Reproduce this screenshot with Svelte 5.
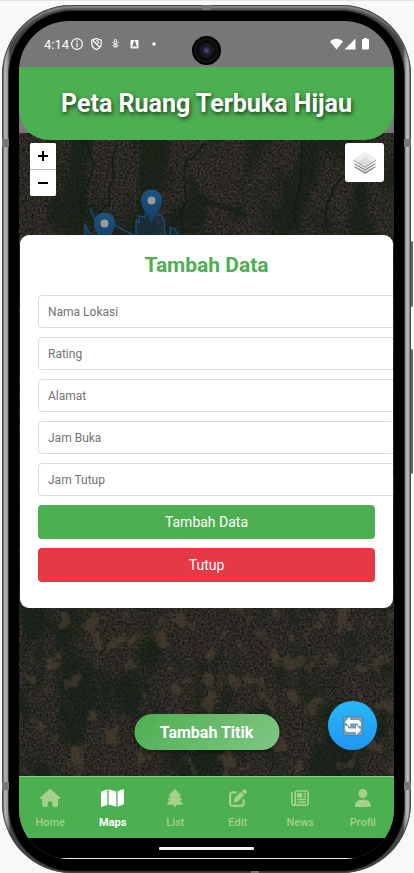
<script>
  let form = $state({ nama: '', rating: '', alamat: '', buka: '', tutup: '' });
  let open = $state(true);

  const fields = [
    { key: 'nama', label: 'Nama Lokasi' },
    { key: 'rating', label: 'Rating' },
    { key: 'alamat', label: 'Alamat' },
    { key: 'buka', label: 'Jam Buka' },
    { key: 'tutup', label: 'Jam Tutup' }
  ];

  const tabs = [
    { label: 'Home', box: '0 0 576 512', path: 'M575.8 255.5c0 18-15 32.1-32 32.1h-32l.7 160.2c0 2.7-.2 5.4-.5 8.1V472c0 22.1-17.9 40-40 40H392c-22.1 0-40-17.9-40-40V384c0-17.7-14.3-32-32-32H256c-17.7 0-32 14.3-32 32v88c0 22.1-17.9 40-40 40H104c-22.1 0-40-17.9-40-40V287.6H32c-18 0-32-14-32-32.1c0-9 3-17 10-24L266.4 8c7-7 15-8 22-8s15 2 21 7L564.8 231.5c8 7 12 15 11 24z' },
    { label: 'Maps', active: true, box: '0 30 576 452', path: 'M384 476.1L192 421.2V35.9L384 90.8V476.1zm32-1.2V88.4L543.1 37.5c15.8-6.3 32.9 5.3 32.9 22.3V394.6c0 9.8-6 18.6-15.1 22.3L416 474.8zM15.1 95.1L160 37.2V423.6L32.9 474.5C17.1 480.8 0 469.2 0 452.2V117.4c0-9.8 6-18.6 15.1-22.3z' },
    { label: 'List', box: '0 0 448 512', path: 'M210.6 5.9L62 169.4c-3.9 4.2-6 9.8-6 15.5C56 197.7 66.3 208 79.1 208H104L30.6 281.4c-4.2 4.2-6.6 10-6.6 16C24 309.9 34.1 320 46.6 320H80L5.4 409.5C1.9 413.7 0 419 0 424.5c0 13 10.5 23.5 23.5 23.5H192v32c0 17.7 14.3 32 32 32s32-14.3 32-32V448H424.5c13 0 23.5-10.5 23.5-23.5c0-5.5-1.9-10.8-5.4-15L368 320h33.4c12.5 0 22.6-10.1 22.6-22.6c0-6-2.4-11.8-6.6-16L344 208h24.9c12.7 0 23.1-10.3 23.1-23.1c0-5.7-2.1-11.3-6-15.5L237.4 5.9C234 2.1 229.1 0 224 0s-10 2.1-13.4 5.9z' },
    { label: 'Edit', box: '0 0 512 512', path: 'M471.6 21.7c-21.9-21.9-57.3-21.9-79.2 0L362.3 51.7l97.9 97.9 30.1-30.1c21.9-21.9 21.9-57.3 0-79.2L471.6 21.7zm-299.2 220c-6.1 6.1-10.8 13.6-13.5 21.9l-29.6 88.8c-2.9 8.6-.6 18.1 5.8 24.6s15.9 8.7 24.6 5.8l88.8-29.6c8.2-2.7 15.7-7.4 21.9-13.5L437.7 172.3 339.7 74.3 172.4 241.7zM96 64C43 64 0 107 0 160V416c0 53 43 96 96 96H352c53 0 96-43 96-96V320c0-17.7-14.3-32-32-32s-32 14.3-32 32v96c0 17.7-14.3 32-32 32H96c-17.7 0-32-14.3-32-32V160c0-17.7 14.3-32 32-32h96c17.7 0 32-14.3 32-32s-14.3-32-32-32H96z' },
    { label: 'News', box: '0 0 512 512', path: 'M168 80c-13.3 0-24 10.7-24 24V408c0 8.4-1.4 16.5-4.1 24H440c13.3 0 24-10.7 24-24V104c0-13.3-10.7-24-24-24H168zM72 480c-39.8 0-72-32.2-72-72V112C0 98.7 10.7 88 24 88s24 10.7 24 24V408c0 13.3 10.7 24 24 24s24-10.7 24-24V104c0-39.8 32.2-72 72-72H440c39.8 0 72 32.2 72 72V408c0 39.8-32.2 72-72 72H72zM176 136c0-13.3 10.7-24 24-24h96c13.3 0 24 10.7 24 24v80c0 13.3-10.7 24-24 24H200c-13.3 0-24-10.7-24-24V136zm200-24h32c13.3 0 24 10.7 24 24s-10.7 24-24 24H376c-13.3 0-24-10.7-24-24s10.7-24 24-24zm0 80h32c13.3 0 24 10.7 24 24s-10.7 24-24 24H376c-13.3 0-24-10.7-24-24s10.7-24 24-24zM200 272H408c13.3 0 24 10.7 24 24s-10.7 24-24 24H200c-13.3 0-24-10.7-24-24s10.7-24 24-24zm0 80H408c13.3 0 24 10.7 24 24s-10.7 24-24 24H200c-13.3 0-24-10.7-24-24s10.7-24 24-24z' },
    { label: 'Profil', box: '0 0 448 512', path: 'M224 256A128 128 0 1 0 224 0a128 128 0 1 0 0 256zm-45.7 48C79.8 304 0 383.8 0 482.3C0 498.7 13.3 512 29.7 512H418.3c16.4 0 29.7-13.3 29.7-29.7C448 383.8 368.2 304 269.7 304H178.3z' }
  ];

  const pins = [
    { x: 132, y: 57 },
    { x: 85, y: 80 }
  ];
</script>

<div class="page">
  <div class="phone">
    <i class="band top"></i><i class="band bottom"></i>
    <i class="band l1"></i><i class="band r1"></i>
    <i class="band l2"></i><i class="band r2"></i>
    <i class="key power"></i><i class="key volume"></i>
    <div class="bezel">
      <div class="screen">
        <div class="status">
          <span>4:14</span>
          <svg class="notes" width="120" height="14" viewBox="0 0 120 14" fill="none" stroke="#fff" stroke-width="1.2">
            <circle cx="7" cy="7" r="5.4" /><path d="M7 6v4M7 3.6v1.4" />
            <path d="M26.500 1.500l4.700 1.700v3.500c0 2.700-1.900 4.700-4.700 5.800-2.800-1.100-4.700-3.100-4.700-5.800V3.200zM23 3.500l7 7M26 3.500c3 0 3 3 1 4" />
            <g stroke-width="1"><circle cx="45.500" cy="3.800" r="1.300" /><path d="M42.500 5.500q3 2.400 6 0M43 8.500a2.700 2.700 0 0 0 5 0q-2.500-2.500-5 0zM44.500 9h2" /></g>
            <rect x="60.500" y="3" width="8" height="8.500" rx="1" fill="#fff" stroke="none" /><path d="M62.700 9.800l1.800-5 1.800 5M63.300 8.300h2.400" stroke="#666" />
            <circle cx="84" cy="7" r="1.700" fill="#fff" stroke="none" />
          </svg>
          <svg class="signal" width="40" height="14" viewBox="0 0 40 14" fill="#fff">
            <path d="M0 4.500c4-3.600 9-3.600 13 0L6.500 12.500zM25.500 1.500v11H14.500zM32 3q0-1 1-1h1V1h3v1h1q1 0 1 1v8.500q0 1-1 1h-5q-1 0-1-1z" />
          </svg>
          <i class="camera"></i>
        </div>
        <header><h1>Peta Ruang Terbuka Hijau</h1></header>

        <main>
          <svg class="tiles" width="100%" height="100%" aria-hidden="true">
            <defs>
              <filter id="town" x="0" y="0" width="100%" height="100%" color-interpolation-filters="sRGB">
                <feTurbulence type="fractalNoise" baseFrequency="0.47 0.43" numOctaves="2" seed="8" />
                <feColorMatrix values="0.24 0.12 0 0 -0.01  0.24 0.1 0 0 -0.01  0.24 0.06 0 0 -0.01  0 0 0 0 1" />
              </filter>
              <filter id="fields" x="0" y="0" width="100%" height="100%" color-interpolation-filters="sRGB">
                <feTurbulence type="fractalNoise" baseFrequency="0.027 0.017" numOctaves="5" seed="34" />
                <feColorMatrix values="0 0 0 0 0.06  0 0 0 0 0.12  0 0 0 0 0.07  5 0 0 0 -2.3" />
              </filter>
              <filter id="soil" x="0" y="0" width="100%" height="100%" color-interpolation-filters="sRGB">
                <feTurbulence type="fractalNoise" baseFrequency="0.06 0.05" numOctaves="4" seed="5" />
                <feColorMatrix values="0 0 0 0 0.31  0 0 0 0 0.26  0 0 0 0 0.20  0 9 0 0 -5.3" />
              </filter>
              <linearGradient id="pin" x1="0" y1="0" x2="0" y2="1">
                <stop offset="0" stop-color="#1d5482" /><stop offset="1" stop-color="#133d62" />
              </linearGradient>
            </defs>
            <rect width="100%" height="100%" filter="url(#town)" />
            <rect width="100%" height="100%" filter="url(#fields)" opacity=".6" />
            <rect y="470" width="100%" height="180" filter="url(#soil)" opacity=".6" />
            <g fill="none" stroke="#101d14" stroke-width="2" opacity=".8">
              <path d="M97 12l-4 18 2 14-5 13 1 12-12 12" />
              <path d="M67 8l8 24-6 20-9 16 5 14" />
              <path d="M187 10l-12 14-8 4-2 18 2 22-6 14 4 18" />
              <path d="M283 8l-1 36-4 22-3 12 4 22" />
              <path d="M325 42l-10 12-6 16-3 10 2 10" />
              <path d="M180 62l12 9 18 4 18 9" stroke-width="5" opacity=".7" />
            </g>
            <path d="M119 6v26l-3 20 2 50" fill="none" stroke="#55534e" stroke-dasharray="3 2" opacity=".6" />
            <path d="M329 33l4 1-2 11-4-1z" fill="#66645f" />
            <path d="M117 102V88l3 1v-6l6 1 1-4 14 2 4 4 1 16M71 76l5 11 5-3 44 24M66 102V91l6 13M151 102v-7l5 1 3 6" fill="#173f5e66" stroke="#174a74" stroke-width="1.500" />
            {#each pins as p}
              <g transform="translate({p.x - 11} {p.y - 1})">
                <path d="M11.500 34C9 27 1 20 1 11a10.500 10.500 0 0 1 21 0c0 9-8 16-10.500 23z" fill="url(#pin)" />
                <circle cx="11.500" cy="11.500" r="4" fill="#999" />
              </g>
            {/each}
          </svg>

          <div class="zoomer">
            <button aria-label="Zoom in"><svg width="10" height="10"><path d="M5 0v10M0 5h10" stroke="#000" stroke-width="2" /></svg></button>
            <button aria-label="Zoom out"><svg width="10" height="10"><path d="M0 5h10" stroke="#000" stroke-width="2" /></svg></button>
          </div>
          <button class="layers" aria-label="Layers">
            <svg width="26" height="26" viewBox="0 0 26 26">
              <path d="M2 17l11-7 11 7-11 7z" fill="#8c8c8c" /><path d="M1 15l12-7 12 7-12 7z" fill="#fff" />
              <path d="M2 14l11-7 11 7-11 7z" fill="#949494" /><path d="M1 12l12-7 12 7-12 7z" fill="#fff" />
              <path d="M1.500 10.500L13 3l11.500 7.500L13 18z" fill="#8a8a8a" /><path d="M1.500 9.500L13 2l11.500 7.500L13 17z" fill="#dcdcdc" />
              <path d="M1.500 9.500L13 2l11.500 7.500-4 2.500L13 7l-7.500 5z" fill="#eee" />
            </svg>
          </button>

          <button class="add" onclick={() => (open = true)}>Tambah Titik</button>
          <button class="reload" aria-label="Refresh">
            <svg width="20" height="20" viewBox="0 0 20 20">
              <rect x=".5" y=".5" width="19" height="19" rx="1" fill="#6fa0bd" stroke="#5b8496" />
              <path d="M2 6l5-5v3h7q4 0 4 4v2h-3V8.500Q15 7.500 14 7.500H7V11zM18 14l-5 5v-3H6q-4 0-4-4v-2h3v1.500q0 1 1 1h7V9z" fill="#fff" />
            </svg>
          </button>

          {#if open}
            <form class="modal" onsubmit={(e) => e.preventDefault()}>
              <h2>Tambah Data</h2>
              {#each fields as f}
                <input type="text" aria-label={f.label} placeholder={f.label} bind:value={form[f.key]} />
              {/each}
              <button class="save" type="submit">Tambah Data</button>
              <button class="close" type="button" onclick={() => (open = false)}>Tutup</button>
            </form>
          {/if}
        </main>

        <nav>
          {#each tabs as t}
            <a href="#{t.label}" class:active={t.active}>
              <svg viewBox={t.box} fill="currentColor" aria-hidden="true"><path d={t.path} /></svg>
              <span>{t.label}</span>
            </a>
          {/each}
        </nav>
        <div class="gesture"><i></i></div>
      </div>
    </div>
  </div>
</div>

<style>
  :global(body) { margin: 0; background: #f7f8fa; }
  .page {
    box-sizing: border-box;
    display: flex;
    min-height: 100vh;
    padding: 4px 3px 0 2px;
    border-top: 1px solid #e3e4e6;
    font-family: Roboto, "Noto Sans", sans-serif;
  }
  button, input { font-family: inherit; }
  button { border: 0; padding: 0; cursor: pointer; }
  .phone {
    position: relative;
    flex: 1;
    display: flex;
    min-width: 0;
    border-radius: 70px;
    padding: 6px 7px 2px;
    background: linear-gradient(90deg, #4a4a4a, #b9bbba 3px, #8f9190 6px, #444 8px, #444 calc(100% - 8px), #8b8a8c calc(100% - 6px), #c4c3c5 calc(100% - 3px), #555);
    box-shadow: inset 0 0 1px 1px #444, inset 0 5px 3px -2px #999;
  }
  .bezel {
    flex: 1;
    display: flex;
    min-width: 0;
    padding: 10px 10px 12px;
    border-radius: 64px;
    background: #000;
    box-shadow: 0 0 0 1px #333;
  }
  .screen {
    flex: 1;
    display: flex;
    flex-direction: column;
    min-width: 0;
    border-radius: 50px;
    overflow: hidden;
    background: #777;
  }
  .status {
    position: relative;
    display: flex;
    align-items: center;
    height: 46px;
    box-sizing: border-box;
    padding: 0 24px 0 25px;
    color: #fff;
    font-size: 13px;
  }
  .notes { margin-left: 1px; }
  .signal { margin-left: auto; }
  .camera {
    position: absolute;
    left: 50%;
    top: 15px;
    width: 29px;
    height: 29px;
    margin-left: -15px;
    border-radius: 50%;
    background: radial-gradient(circle, #4a4470 0 1px, #1a1830 4px, #1b1a20 6px, #060608 9px, #161616 11px, #000 13px);
  }
  header {
    position: relative;
    z-index: 1;
    height: 73px;
    display: flex;
    align-items: center;
    justify-content: center;
    border-radius: 0 0 30px 30px;
    background: #4caf50;
  }
  h1 {
    margin: 0;
    color: #fff;
    font-size: 25px;
    font-weight: 700;
    text-shadow: 1px 2px 4px rgba(0, 0, 0, .7);
  }
  main {
    position: relative;
    flex: 1;
    margin-top: -7px;
    min-height: 600px;
    background: #272521;
  }
  .tiles { position: absolute; inset: 0; }
  .zoomer {
    position: absolute;
    top: 10px;
    left: 11px;
    display: flex;
    flex-direction: column;
    gap: 1px;
    border-radius: 2px;
    overflow: hidden;
    background: #bbb;
  }
  .zoomer button {
    display: flex;
    align-items: center;
    justify-content: center;
    width: 26px;
    height: 26px;
    background: #fff;
  }
  .layers {
    position: absolute;
    top: 10px;
    right: 10px;
    display: flex;
    align-items: center;
    justify-content: center;
    width: 39px;
    height: 39px;
    border-radius: 3px;
    background: #fff;
  }
  .add {
    position: absolute;
    left: 50%;
    bottom: 26px;
    transform: translateX(-50%);
    width: 145px;
    height: 36px;
    border-radius: 18px;
    background: linear-gradient(135deg, #4caf50, #81c784);
    color: #fff;
    font-size: 16px;
    font-weight: 700;
    box-shadow: 0 2px 4px rgba(0, 0, 0, .4);
  }
  .reload {
    position: absolute;
    right: 17px;
    bottom: 26px;
    display: flex;
    align-items: center;
    justify-content: center;
    width: 49px;
    height: 49px;
    border-radius: 50%;
    background: linear-gradient(0deg, #2196f3, #25b9f8);
  }
  .modal {
    position: absolute;
    top: 102px;
    left: 1px;
    right: 1px;
    display: flex;
    flex-direction: column;
    gap: 9px;
    padding: 15px 18px 26px;
    border-radius: 9px;
    overflow: hidden;
    background: #fff;
  }
  h2 {
    margin: 0 0 6px;
    color: #4caf50;
    font-size: 21px;
    line-height: 30px;
    font-weight: 700;
    text-align: center;
  }
  input {
    box-sizing: content-box;
    width: 100%;
    height: 31px;
    padding: 0 9px;
    border: 1px solid #d9dbdc;
    border-radius: 4px;
    background: #fff;
    color: #333;
    font-size: 12px;
    outline: none;
  }
  input::placeholder { color: #737373; opacity: 1; }
  .modal button {
    height: 34px;
    border-radius: 4px;
    color: #fff;
    font-size: 14px;
  }
  .save { background: #4caf50; }
  .close { background: #e63946; }
  nav {
    display: flex;
    height: 62px;
    box-sizing: border-box;
    border-top: 1px solid #8fc48f;
    background: #4caf50;
  }
  nav a {
    flex: 1;
    display: flex;
    flex-direction: column;
    align-items: center;
    padding-top: 12px;
    gap: 9px;
    color: #a5d18c;
    font-size: 11px;
    line-height: 13px;
    font-weight: 500;
    text-decoration: none;
  }
  nav svg { height: 18px; }
  nav .active { color: #fff; font-weight: 700; }
  .gesture {
    display: flex;
    justify-content: center;
    height: 20px;
    border-bottom: 1px solid #eee;
    background: #000;
  }
  .gesture i { width: 95px; height: 3px; margin-top: 9px; border-radius: 1px; background: #f2f2f2; }
  .band { position: absolute; background: #777; }
  .band.l1, .band.l2 { left: 0; width: 7px; height: 8px; }
  .band.r1, .band.r2 { right: 0; width: 7px; height: 8px; }
  .band.l1, .band.r1 { top: 134px; }
  .band.l2, .band.r2 { bottom: 83px; }
  .band.top { top: 0; left: 200px; width: 9px; height: 5px; }
  .band.bottom { bottom: 0; left: 249px; width: 8px; height: 2px; }
  .key { position: absolute; right: -2px; width: 2px; background: #666; border-radius: 0 2px 2px 0; }
  .power { top: 236px; height: 66px; }
  .volume { top: 344px; height: 125px; }
</style>
